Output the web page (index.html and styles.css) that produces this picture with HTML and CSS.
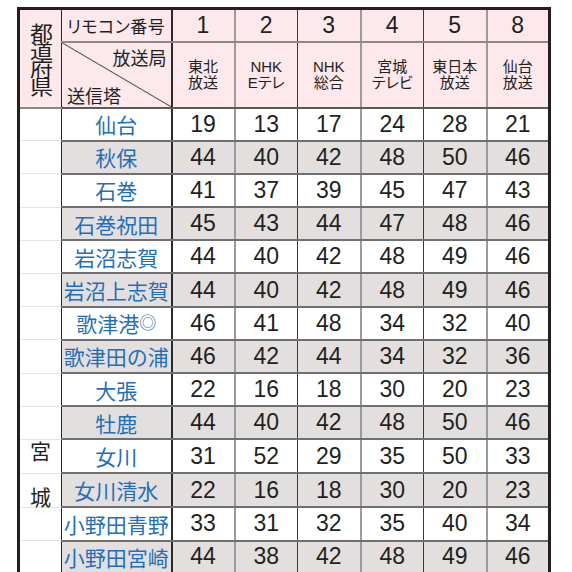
FILE: index.html
```html
<!DOCTYPE html>
<html lang="ja">
<head>
<meta charset="utf-8">
<link rel="stylesheet" href="styles.css">
</head>
<body>
<table class="tbl">
  <colgroup>
    <col class="w-pref"><col class="w-tower"><col class="w-n"><col class="w-n"><col class="w-n"><col class="w-n"><col class="w-n"><col class="w-n">
  </colgroup>
  <thead>
    <tr class="h1">
      <th class="pref-h" rowspan="2"><div class="pref-h-txt">都道府県</div></th>
      <th class="remo">リモコン番号</th>
      <th class="num-h gr">1</th>
      <th class="num-h dk">2</th>
      <th class="num-h gr">3</th>
      <th class="num-h dk">4</th>
      <th class="num-h gr">5</th>
      <th class="num-h">8</th>
    </tr>
    <tr class="h2">
      <th class="diag"><div class="diag-in"><span class="kyoku">放送局</span><span class="tou">送信塔</span></div></th>
      <th class="st gr"><span class="st-txt">東北&#8203;放送</span></th>
      <th class="st dk"><span class="st-txt">NHK&#8203;Eテレ</span></th>
      <th class="st gr"><span class="st-txt">NHK&#8203;総合</span></th>
      <th class="st dk"><span class="st-txt">宮城&#8203;テレビ</span></th>
      <th class="st gr"><span class="st-txt">東日本&#8203;放送</span></th>
      <th class="st"><span class="st-txt">仙台&#8203;放送</span></th>
    </tr>
  </thead>
  <tbody>
    <tr class="w"><td class="pref"></td><td class="tw">仙台</td><td class="gr">19</td><td class="dk">13</td><td class="gr">17</td><td class="dk">24</td><td class="gr">28</td><td>21</td></tr>
    <tr class="g"><td class="pref"></td><td class="tw">秋保</td><td class="gr">44</td><td class="dk">40</td><td class="gr">42</td><td class="dk">48</td><td class="gr">50</td><td>46</td></tr>
    <tr class="w"><td class="pref"></td><td class="tw">石巻</td><td class="gr">41</td><td class="dk">37</td><td class="gr">39</td><td class="dk">45</td><td class="gr">47</td><td>43</td></tr>
    <tr class="g"><td class="pref"></td><td class="tw">石巻祝田</td><td class="gr">45</td><td class="dk">43</td><td class="gr">44</td><td class="dk">47</td><td class="gr">48</td><td>46</td></tr>
    <tr class="w"><td class="pref"></td><td class="tw">岩沼志賀</td><td class="gr">44</td><td class="dk">40</td><td class="gr">42</td><td class="dk">48</td><td class="gr">49</td><td>46</td></tr>
    <tr class="g"><td class="pref"></td><td class="tw">岩沼上志賀</td><td class="gr">44</td><td class="dk">40</td><td class="gr">42</td><td class="dk">48</td><td class="gr">49</td><td>46</td></tr>
    <tr class="w"><td class="pref"></td><td class="tw">歌津港<span class="mark">◎</span></td><td class="gr">46</td><td class="dk">41</td><td class="gr">48</td><td class="dk">34</td><td class="gr">32</td><td>40</td></tr>
    <tr class="g"><td class="pref"></td><td class="tw">歌津田の浦</td><td class="gr">46</td><td class="dk">42</td><td class="gr">44</td><td class="dk">34</td><td class="gr">32</td><td>36</td></tr>
    <tr class="w"><td class="pref"></td><td class="tw">大張</td><td class="gr">22</td><td class="dk">16</td><td class="gr">18</td><td class="dk">30</td><td class="gr">20</td><td>23</td></tr>
    <tr class="g"><td class="pref"></td><td class="tw">牡鹿</td><td class="gr">44</td><td class="dk">40</td><td class="gr">42</td><td class="dk">48</td><td class="gr">50</td><td>46</td></tr>
    <tr class="w"><td class="pref pref-a">宮</td><td class="tw">女川</td><td class="gr">31</td><td class="dk">52</td><td class="gr">29</td><td class="dk">35</td><td class="gr">50</td><td>33</td></tr>
    <tr class="g"><td class="pref pref-b">城</td><td class="tw">女川清水</td><td class="gr">22</td><td class="dk">16</td><td class="gr">18</td><td class="dk">30</td><td class="gr">20</td><td>23</td></tr>
    <tr class="w"><td class="pref"></td><td class="tw">小野田青野</td><td class="gr">33</td><td class="dk">31</td><td class="gr">32</td><td class="dk">35</td><td class="gr">40</td><td>34</td></tr>
    <tr class="g"><td class="pref"></td><td class="tw">小野田宮崎</td><td class="gr">44</td><td class="dk">38</td><td class="gr">42</td><td class="dk">48</td><td class="gr">49</td><td>46</td></tr>
  </tbody>
</table>
</body>
</html>
```
FILE: styles.css
```css
html, body {
  margin: 0;
  padding: 0;
  background: #ffffff;
}

.tbl {
  border-collapse: collapse;
  table-layout: fixed;
  margin: 7px 0 0 17px;
  border: 3px solid #231f20;
  font-family: "Noto Sans CJK JP", sans-serif;
  color: #231f20;
}

.w-pref { width: 43px; }
.w-tower { width: 110px; }
.w-n { width: 63px; }

th, td {
  padding: 0;
  text-align: center;
  vertical-align: middle;
  border-bottom: 2px solid #6f6f6f;
}

th {
  background: #fde8ec;
  font-weight: normal;
}

.h1 { height: 33px; }
.h2 { height: 66px; }

.h1 th { border-bottom: 2px solid #8a8a8a; }
.h2 th { border-bottom: 2px solid #5a5a5a; }

.gr { border-right: 2px solid #9b9b9b; }
.dk { border-right: 1.5px solid #3a3a3a; }

.pref-h {
  border-right: 1.5px solid #2a2a2a;
  border-bottom: 2px solid #5a5a5a;
  vertical-align: top;
  padding-top: 13px;
}
.pref-h-txt {
  display: inline-block;
  writing-mode: vertical-rl;
  font-size: 20px;
  line-height: 20px;
  letter-spacing: -2px;
  transform: scaleX(1.15);
}

.remo {
  border-right: 2px solid #2a2a2a;
  font-size: 17px;
  font-feature-settings: "palt";
  text-align: left;
  padding-left: 5px;
  letter-spacing: 0.5px;
}

.num-h {
  font-family: "Liberation Sans", Arial, sans-serif;
  font-size: 23px;
}

.diag {
  border-right: 2px solid #2a2a2a;
  background: linear-gradient(to top right, transparent calc(50% - 0.8px), #2a2a2a 50%, transparent calc(50% + 0.8px)), #fde8ec;
}
.diag-in {
  height: 64px;
  display: flex;
  flex-direction: column;
  justify-content: space-between;
  font-size: 18px;
  line-height: 22px;
  padding: 3px 4px 1px 5px;
  box-sizing: border-box;
}
.kyoku { align-self: flex-end; }
.tou { align-self: flex-start; }

.st {
  font-family: "Liberation Sans", "Noto Sans CJK JP", sans-serif;
  font-size: 15px;
  line-height: 16px;
  font-feature-settings: "palt";
}
.st-txt {
  display: inline-block;
  width: min-content;
  word-break: keep-all;
  text-align: center;
}

tbody tr { height: 33.2px; }
tr.w td { background: #ffffff; }
tr.g td { background: #e3dfde; }

tbody td {
  font-family: "Liberation Sans", Arial, sans-serif;
  font-size: 23px;
}

tbody td.pref {
  background: #ffffff;
  border-right: 1.5px solid #2a2a2a;
  border-bottom: 1px solid #e4e4e4;
  font-family: "Noto Sans CJK JP", sans-serif;
  font-size: 21px;
  line-height: 21px;
}
tbody td.pref-a { padding-bottom: 12px; }
tbody td.pref-b { padding-top: 12px; }

tbody td.tw {
  font-family: "Noto Sans CJK JP", sans-serif;
  font-size: 21px;
  color: #1f6fba;
  border-right: 2px solid #2a2a2a;
  white-space: nowrap;
}
.mark {
  font-size: 17px;
  vertical-align: 3px;
}
```
